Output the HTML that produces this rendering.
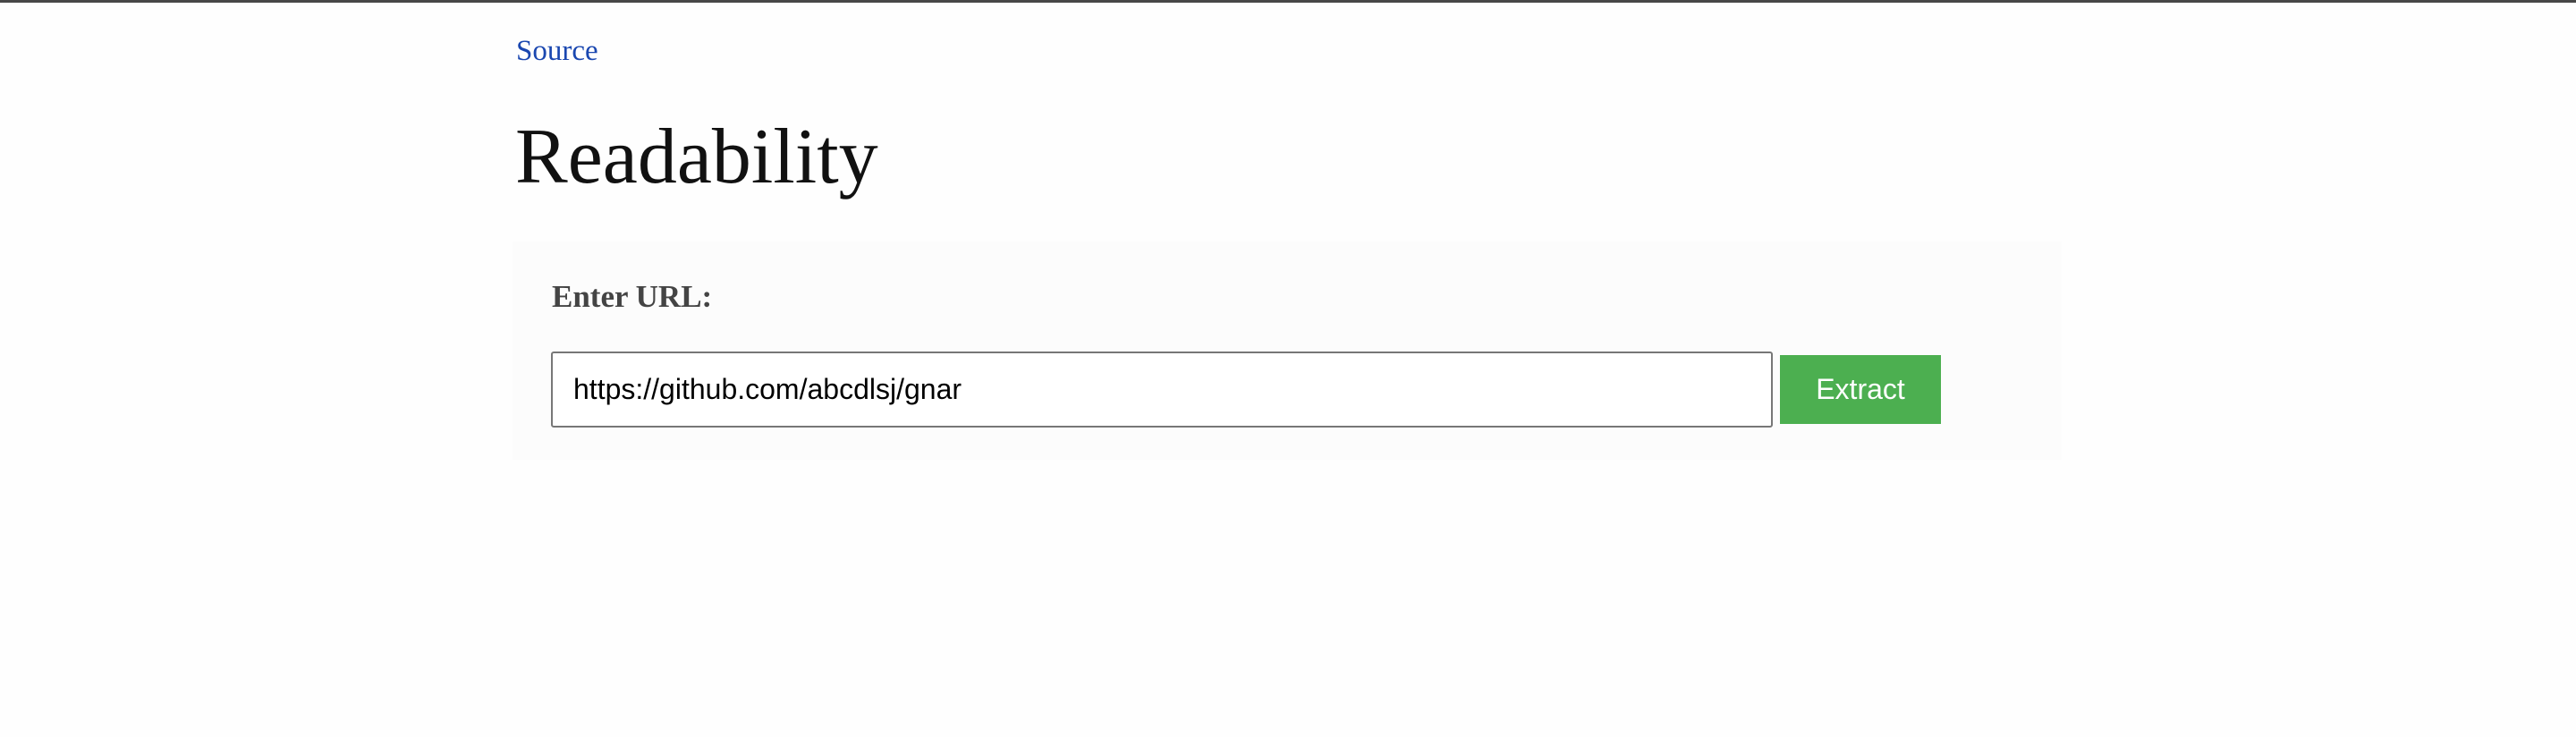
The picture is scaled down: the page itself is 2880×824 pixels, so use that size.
<!DOCTYPE html>
<html><head><meta charset="utf-8"><style>
html,body{margin:0;padding:0;}
body{width:2880px;height:824px;background:#fefefe;position:relative;overflow:hidden;font-family:"Liberation Serif",serif;}
.top{position:absolute;left:0;top:0;width:2880px;height:3px;background:#474747;}
.src{position:absolute;left:577px;top:39px;font-size:33px;color:#1a47b0;text-decoration:none;}
h1{position:absolute;left:576px;top:128px;margin:0;font-weight:normal;font-size:88px;color:#111;line-height:1.1;}
.panel{position:absolute;left:573px;top:270px;width:1732px;height:244px;background:#fcfcfc;}
.lbl{position:absolute;left:617px;top:312px;font-size:35px;font-weight:bold;color:#444;}
.inp{position:absolute;left:616px;top:393px;width:1362px;height:81px;border:2px solid #777;border-radius:3px;background:#fff;box-sizing:content-box;}
.inp span{position:absolute;left:23px;top:22px;font-family:"Liberation Sans",sans-serif;font-size:32px;color:#000;}
.btn{position:absolute;left:1990px;top:397px;width:180px;height:77px;background:#4caf50;color:#fff;font-family:"Liberation Sans",sans-serif;font-size:32px;text-align:center;line-height:77px;}
</style></head><body>
<div class="top"></div>
<a class="src">Source</a>
<h1>Readability</h1>
<div class="panel"></div>
<div class="lbl">Enter URL:</div>
<div class="inp"><span>https://github.com/abcdlsj/gnar</span></div>
<div class="btn">Extract</div>
</body></html>
